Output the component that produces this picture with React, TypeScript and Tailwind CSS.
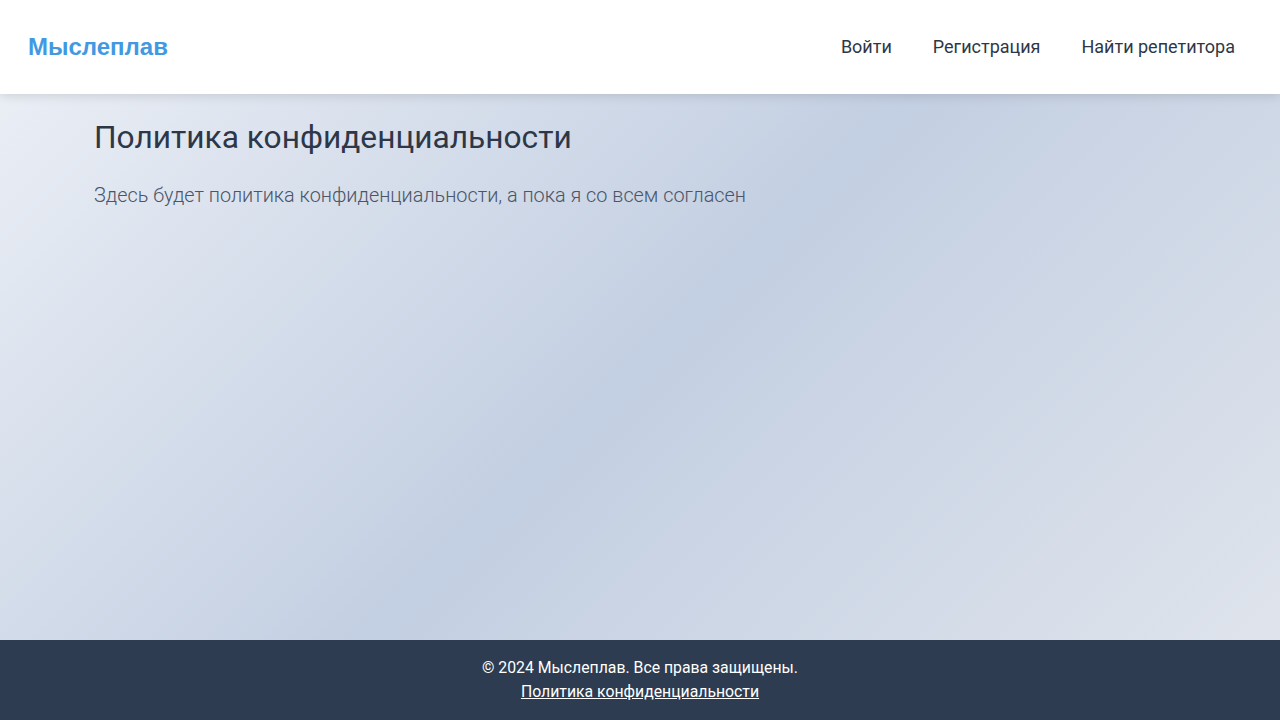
const App = () => {
  return (
    <div className="min-h-screen flex flex-col font-['Roboto',sans-serif]">
      <header className="relative z-10 h-[94px] bg-white shadow-[0_2px_10px_rgba(0,0,0,0.12)] flex items-center justify-between px-7">
        <a className="font-['Liberation_Sans',Arial,sans-serif] font-bold text-[24px] text-[#4299e1]">
          Мыслеплав
        </a>
        <nav className="flex items-center gap-[41px] pr-[17px] pb-[2px] text-[18px] text-[#2d3748]">
          <a>Войти</a>
          <a>Регистрация</a>
          <a>Найти репетитора</a>
        </nav>
      </header>

      <main className="flex-1 bg-linear-135 from-[#eaeef5] via-[#c3cfe2] to-[#dfe4ec] px-[94px] pt-[20px]">
        <h1 className="text-[31.7px] leading-[48px] text-[#2d3748]">Политика конфиденциальности</h1>
        <p className="mt-[19px] text-[19.85px] font-light text-[#4a5568]">
          Здесь будет политика конфиденциальности, а пока я со всем согласен
        </p>
      </main>

      <footer className="h-[80px] bg-[#2d3c50] text-white text-[15.8px] flex flex-col items-center justify-center leading-[24px]">
        <p>© 2024 Мыслеплав. Все права защищены.</p>
        <a className="underline">Политика конфиденциальности</a>
      </footer>
    </div>
  );
};

export default App;
